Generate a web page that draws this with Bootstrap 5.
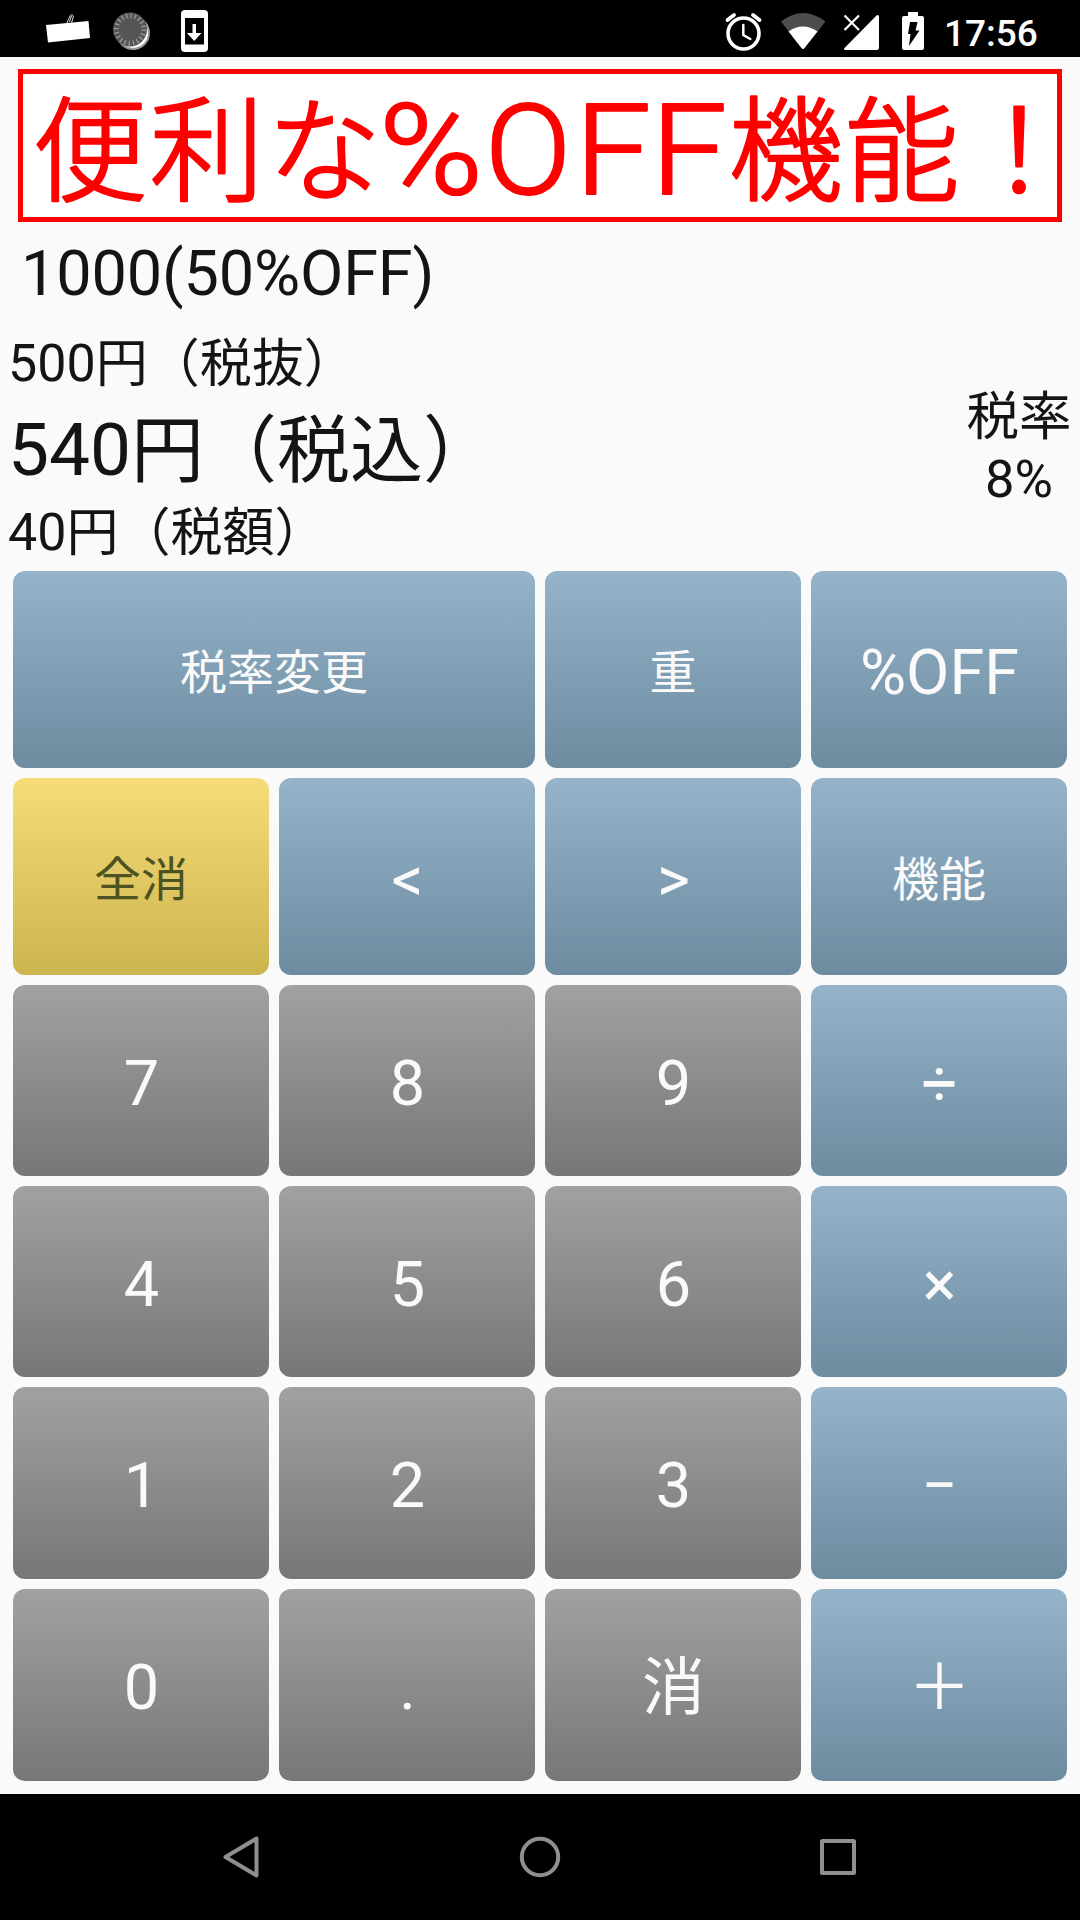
<!DOCTYPE html>
<html lang="ja">
<head>
<meta charset="utf-8">
<meta name="viewport" content="width=device-width, initial-scale=1">
<title>税計算電卓</title>
<link href="https://cdn.jsdelivr.net/npm/bootstrap@5.3.0/dist/css/bootstrap.min.css" rel="stylesheet">
<style>
body{font-family:Roboto,"Noto Sans CJK JP",sans-serif;background:#fafafa;color:#141414}
.screen{width:1080px;height:1920px;overflow:hidden}
.statusbar{height:57px;background:#000}
.clock{font-size:37px;font-weight:500;line-height:57px;color:#fff;width:136px;padding-top:5px;white-space:nowrap}
.display{height:514px}
.banner{height:153px;margin:12px 18px 0;border:5px solid #f00;background:#fff}
.banner svg{overflow:visible}
.formula{font-size:63px;line-height:80px;margin-top:12px;padding-left:21px;letter-spacing:-.15px}
.results{padding:20px 0 0 8px}
.unit{vertical-align:-1px}
.sub{font-size:52px;line-height:60px;height:60px}
.total{font-size:73px;line-height:90px;height:90px;margin:11px 0 8px}
.rate{font-size:52.5px;line-height:62px;width:122px;padding-top:71px}
.keypad{grid-template-columns:repeat(4,256px);grid-template-rows:197px 197px 191px 191px 192px 192px;gap:10px;padding:0 13px;height:1223px}
.key{border:0;border-radius:12px;padding:5px 0 0 1px;font-size:63px;line-height:1;color:#fafafa}
.key:hover{color:#fafafa}
.key-blue,.key-blue:hover{background:linear-gradient(#95b3c9,#6d8ca0)}
.key-gray,.key-gray:hover{background:linear-gradient(#a1a1a1,#777)}
.key-yellow,.key-yellow:hover{background:linear-gradient(#f6dc79,#ccb44f);color:#4c5220}
.key-wide{grid-column:span 2}
.key-jp{font-size:47px;padding:5px 0 0}
.softkeys{height:126px;background:#000}
</style>
</head>
<body>
<div class="screen d-flex flex-column">
  <header class="statusbar d-flex justify-content-between">
    <svg width="300" height="57" viewBox="0 0 300 57">
      <path d="M46 25L88.500 21L90 38L48 42.500Z" fill="#fff"/>
      <path d="M67 23l3-7q2-3 3.500 0l-2 7M69.500 22l2-6" fill="none" stroke="#ddd" stroke-width="1"/>
      <circle cx="133" cy="33" r="16" fill="#fff" stroke="#999" stroke-width="2"/>
      <circle cx="130" cy="29.500" r="17" fill="#555"/>
      <circle cx="130" cy="29.500" r="13.700" fill="none" stroke="#999" stroke-width="5" stroke-dasharray="1.300 3.004"/>
      <rect x="181" y="10" width="27" height="42" rx="4" fill="#fff"/>
      <path d="M185 18h19v26.500h-19z" fill="#000"/>
      <path d="M192.500 24h3.500v9h5.500l-7.300 8-7.300-8h5.600z" fill="#fff"/>
    </svg>
    <div class="d-flex">
      <svg class="flex-shrink-0" width="244" height="57" viewBox="700 0 244 57">
        <g fill="none" stroke="#fff" stroke-linecap="round">
          <circle cx="743.500" cy="33.500" r="15.500" stroke-width="3.600"/>
          <path d="M743.300 25v10l7 4" stroke-width="2.500"/>
          <path d="M727.500 20l6.500-5M759.500 20l-6.500-5" stroke-width="3.800"/>
        </g>
        <path d="M781 21.500Q803 4.500 825.500 21.500L804.500 48Q803 50 801.500 48Z" fill="#4d4d4d"/>
        <path d="M788.500 31.500Q803 21.500 817.500 31.500L804.500 48Q803 50 801.500 48Z" fill="#fff"/>
        <path d="M876.500 15.500q2.500-1.500 2.500 1.500V48q0 2-2 2h-31q-3.500 0-1-2.500z" fill="#fff"/>
        <path d="M844.500 15.500l14.500 14.500M859 15.500l-14.500 14.500" stroke="#fff" stroke-width="2.200"/>
        <path d="M908 12h10v4h4q2 0 2 2v30q0 2-2 2h-18q-2 0-2-2V18q0-2 2-2h4z" fill="#fff"/>
        <path d="M910 22h7.500l-2 8.500h4L909 46l1.500-12h-2.500z" fill="#000"/>
      </svg>
      <div class="clock">17:56</div>
    </div>
  </header>

  <section class="display">
    <div class="banner">
      <svg class="d-block" width="1034" height="143" viewBox="23 74 1034 143" fill="#f00" stroke="#f00" stroke-linejoin="round">
        <g font-family="Noto Sans CJK JP, sans-serif" font-size="114" font-weight="300" stroke-width="2.600">
          <text y="192" x="33 150 267">便利な</text>
          <text y="192" x="729 845 962">機能！</text>
        </g>
        <g font-family="Roboto, sans-serif" font-size="127" font-weight="300" stroke-width="3">
          <text y="193.500" x="379" textLength="104" lengthAdjust="spacingAndGlyphs" stroke-width="2.200">%</text>
          <text y="193.500" x="485" stroke-width="2.200">O</text>
          <text y="193.500" x="575" textLength="152" lengthAdjust="spacingAndGlyphs" stroke-width="2.200">FF</text>
        </g>
      </svg>
    </div>
    <div class="formula">1000(50%OFF)</div>
    <div class="d-flex justify-content-between">
      <div class="results">
        <div class="sub">500<span class="unit">円（税抜）</span></div>
        <div class="total">540<span class="unit">円（税込）</span></div>
        <div class="sub">40<span class="unit">円（税額）</span></div>
      </div>
      <div class="rate text-center"><span class="unit">税率</span><br>8%</div>
    </div>
  </section>

  <main class="keypad d-grid">
    <button class="btn key key-blue key-wide key-jp">税率変更</button>
    <button class="btn key key-blue key-jp">重</button>
    <button class="btn key key-blue">%OFF</button>
    <button class="btn key key-yellow key-jp">全消</button>
    <button class="btn key key-blue">&lt;</button>
    <button class="btn key key-blue">&gt;</button>
    <button class="btn key key-blue key-jp">機能</button>
    <button class="btn key key-gray">7</button>
    <button class="btn key key-gray">8</button>
    <button class="btn key key-gray">9</button>
    <button class="btn key key-blue">÷</button>
    <button class="btn key key-gray">4</button>
    <button class="btn key key-gray">5</button>
    <button class="btn key key-gray">6</button>
    <button class="btn key key-blue">×</button>
    <button class="btn key key-gray">1</button>
    <button class="btn key key-gray">2</button>
    <button class="btn key key-gray">3</button>
    <button class="btn key key-blue">−</button>
    <button class="btn key key-gray">0</button>
    <button class="btn key key-gray">.</button>
    <button class="btn key key-gray">消</button>
    <button class="btn key key-blue">＋</button>
  </main>

  <nav class="softkeys">
    <svg class="d-block" width="1080" height="126" viewBox="0 1794 1080 126" fill="none" stroke="#8f8f8f" stroke-width="4" stroke-linejoin="round">
      <path d="M225.500 1857L256.500 1838.500V1875.500Z"/>
      <circle cx="540" cy="1857" r="18.200"/>
      <rect x="822" y="1841" width="32" height="32" rx=".5"/>
    </svg>
  </nav>
</div>
<script src="https://cdn.jsdelivr.net/npm/bootstrap@5.3.0/dist/js/bootstrap.bundle.min.js"></script>
</body>
</html>
